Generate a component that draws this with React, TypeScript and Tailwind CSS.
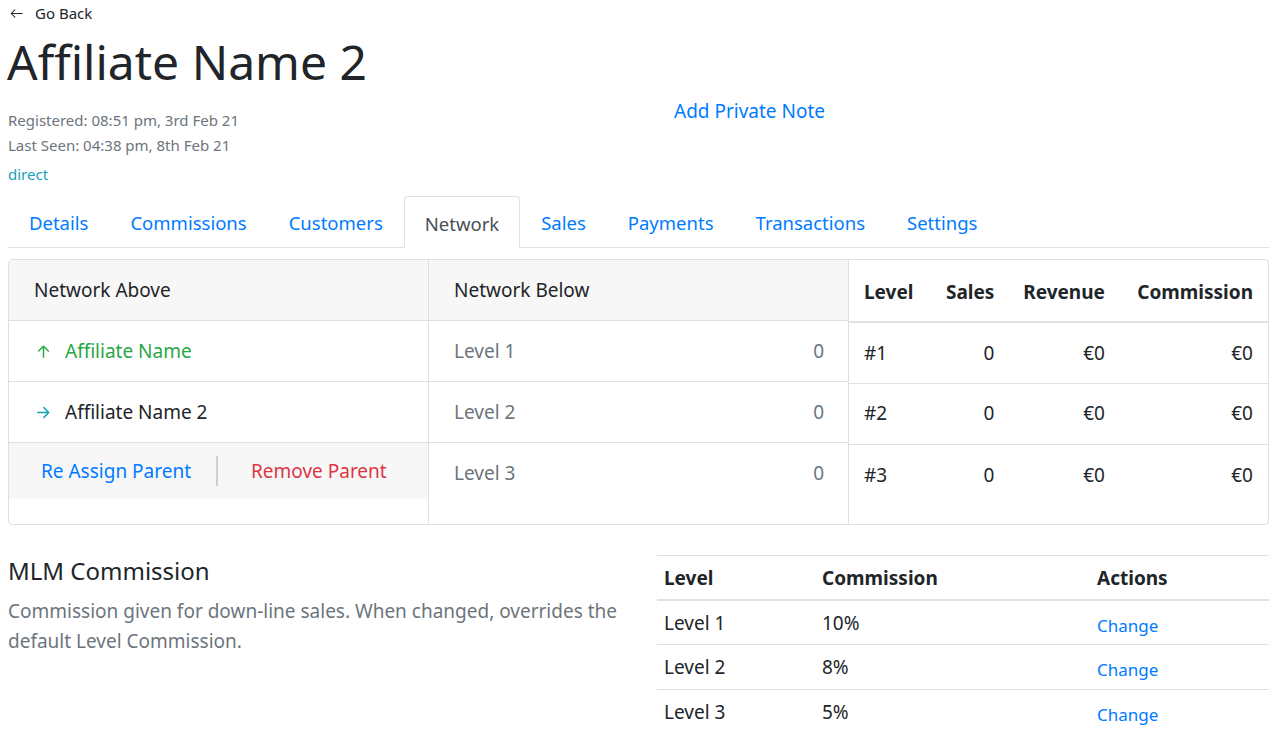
import React from "react";

const F = { fontFamily: '"Segoe UI", "Noto Sans", "Open Sans", sans-serif' };

function ArrowLeft({ className }: { className?: string }) {
  return (
    <svg viewBox="0 0 16 16" width="14" height="14" className={className} fill="none" stroke="currentColor" strokeWidth="1.3" strokeLinecap="round" strokeLinejoin="round">
      <path d="M15 8H1.5M6 3.5L1.5 8 6 12.5" />
    </svg>
  );
}
function ArrowUp({ className }: { className?: string }) {
  return (
    <svg viewBox="0 0 16 16" width="14" height="14" className={className} fill="none" stroke="currentColor" strokeWidth="1.8" strokeLinecap="round" strokeLinejoin="round">
      <path d="M8 15V1.5M2 7.5L8 1.5l6 6" />
    </svg>
  );
}
function ArrowRight({ className }: { className?: string }) {
  return (
    <svg viewBox="0 0 16 16" width="14" height="14" className={className} fill="none" stroke="currentColor" strokeWidth="1.8" strokeLinecap="round" strokeLinejoin="round">
      <path d="M1 8h13.5M8.5 2l6 6-6 6" />
    </svg>
  );
}

const tabs = ["Details", "Commissions", "Customers", "Network", "Sales", "Payments", "Transactions", "Settings"];

export default function App() {
  return (
    <div style={F} className="px-2 text-[#212529] bg-white min-h-[742px]">
      <div className="flex items-center h-[27px] text-[15px] text-[#212529]">
        <ArrowLeft className="shrink-0 w-[13px] h-[13px] ml-[2px] mr-[12px]" />
        <span>Go Back</span>
      </div>
      <div className="flex">
        <div className="w-[666px] shrink-0">
          <h1 className="mt-[5px] text-[48px] leading-[60px] font-normal -ml-[1px]">Affiliate Name 2</h1>
          <div className="mt-[16px] text-[15px] leading-[25px] text-[#6c757d]">Registered: 08:51 pm, 3rd Feb 21</div>
          <div className="text-[15px] leading-[25px] text-[#6c757d]">Last Seen: 04:38 pm, 8th Feb 21</div>
          <div className="mt-[4px] text-[15px] leading-[24px] text-[#17a2b8]">direct</div>
        </div>
        <div className="pt-[70px] text-[19px] text-[#007bff]">Add Private Note</div>
      </div>

      <div className="mt-[10px] flex border-b border-[#dee2e6] h-[52px]">
        {tabs.map((t) => (
          <div
            key={t}
            className={
              t === "Network"
                ? "px-[20px] pt-[3px] flex items-center text-[18.5px] text-[#495057] border border-[#dee2e6] border-b-white rounded-t-[4px] -mb-px bg-white"
                : "px-[20px] pt-[3px] flex items-center text-[18.5px] text-[#007bff] border border-transparent"
            }
          >
            {t}
          </div>
        ))}
      </div>

      <div className="mt-[11px] border border-[#dfdfdf] rounded-[4px] flex h-[266px] overflow-hidden">
        <div className="w-[420px] border-r border-[#dfdfdf] flex flex-col">
          <div className="h-[60px] bg-[#f7f7f7] flex items-center px-[25px] text-[19px]">Network Above</div>
          <div className="h-[61px] border-t border-[#dfdfdf] flex items-center pl-[28px] text-[19px] text-[#28a745]">
            <ArrowUp className="shrink-0 w-[13px] h-[13px] mr-[15px]" />
            Affiliate Name
          </div>
          <div className="h-[61px] border-t border-[#dfdfdf] flex items-center pl-[28px] text-[19px] text-[#212529]">
            <ArrowRight className="shrink-0 w-[13px] h-[13px] mr-[15px] text-[#17a2b8]" />
            Affiliate Name 2
          </div>
          <div className="h-[57px] border-t border-[#dfdfdf] bg-[#f7f7f7] flex items-center text-[19px]">
            <span className="pl-[32px] text-[#007bff]">Re Assign Parent</span>
            <span className="mx-[25px] w-[2px] h-[30px] bg-[#cfcfcf]" />
            <span className="pl-[8px] text-[#dc3545]">Remove Parent</span>
          </div>
        </div>
        <div className="w-[420px] border-r border-[#dfdfdf] flex flex-col">
          <div className="h-[60px] bg-[#f7f7f7] flex items-center px-[25px] text-[19px]">Network Below</div>
          {["Level 1", "Level 2", "Level 3"].map((l) => (
            <div key={l} className="h-[61px] border-t border-[#dfdfdf] flex items-center justify-between pl-[25px] pr-[24px] text-[19px] text-[#6c757d]">
              <span>{l}</span>
              <span>0</span>
            </div>
          ))}
        </div>
        <div className="flex-1">
          <table className="w-full text-[19px] border-collapse">
            <thead>
              <tr className="h-[62px] border-b-2 border-[#dee2e6]">
                <th className="text-left font-bold pl-[15px] pr-[10px] pt-[4px]">Level</th>
                <th className="text-right font-bold px-[10px] pt-[4px]">Sales</th>
                <th className="text-right font-bold px-[10px] pt-[4px]">Revenue</th>
                <th className="text-right font-bold pl-[10px] pr-[15px] pt-[4px]">Commission</th>
              </tr>
            </thead>
            <tbody>
              {["#1", "#2", "#3"].map((l, i) => (
                <tr key={l} className={i < 2 ? "h-[61px] border-b border-[#dee2e6]" : "h-[61px]"}>
                  <td className="pl-[15px]">{l}</td>
                  <td className="text-right px-[10px]">0</td>
                  <td className="text-right px-[10px]">€0</td>
                  <td className="text-right pl-[10px] pr-[15px]">€0</td>
                </tr>
              ))}
            </tbody>
          </table>
        </div>
      </div>

      <div className="mt-[30px] flex">
        <div className="w-[649px] shrink-0">
          <h2 className="text-[24px] leading-[32px] font-normal">MLM Commission</h2>
          <p className="mt-[9px] text-[19px] leading-[30px] text-[#6c757d] w-[620px]">
            Commission given for down-line sales. When changed, overrides the default Level Commission.
          </p>
        </div>
        <div className="flex-1">
          <table className="w-full text-[19px] border-collapse border-t border-[#dee2e6]">
            <thead>
              <tr className="h-[44px] border-b-2 border-[#dee2e6]">
                <th className="text-left font-bold pl-[7px] w-[165px] pt-[2px]">Level</th>
                <th className="text-left font-bold w-[275px] pt-[2px]">Commission</th>
                <th className="text-left font-bold pt-[2px]">Actions</th>
              </tr>
            </thead>
            <tbody>
              {[
                ["Level 1", "10%"],
                ["Level 2", "8%"],
                ["Level 3", "5%"],
              ].map(([l, c], i) => (
                <tr key={l} className={i < 2 ? "h-[45px] border-b border-[#dee2e6]" : "h-[45px]"}>
                  <td className="pl-[7px] align-top pt-[8px]">{l}</td>
                  <td className="align-top pt-[8px]">{c}</td>
                  <td className="align-top pt-[12px] text-[17px] text-[#007bff]">Change</td>
                </tr>
              ))}
            </tbody>
          </table>
        </div>
      </div>
    </div>
  );
}
